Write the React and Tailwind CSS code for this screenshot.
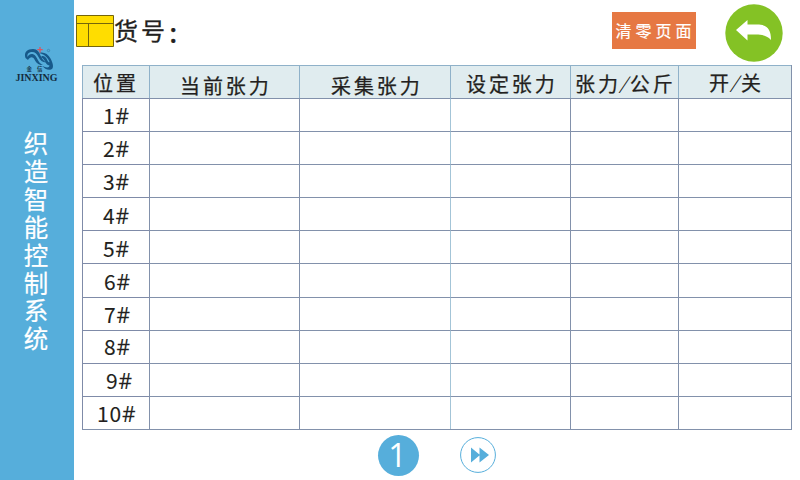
const CJK = "[font-family:'Noto_Sans_CJK_SC','Noto_Sans',sans-serif]";

const HEADERS = [
  { text: "位置", cls: "pl-[10px] pt-[2px]" },
  { text: "当前张力", cls: "pl-[30px] pt-[7px]" },
  { text: "采集张力", cls: "pl-[31px] pt-[7px]" },
  { text: "设定张力", cls: "pl-[15px] pt-[4px]" },
  { text: "张力/公斤", cls: "pl-[4px] pt-[4px]" },
  { text: "开/关", cls: "pl-[30px] pt-[2px]" },
];

const ROWS = [
  { n: 1, cls: "pl-[20px] pt-0" },
  { n: 2, cls: "pl-[20px] pt-0" },
  { n: 3, cls: "pl-[20px] pb-[1px]" },
  { n: 4, cls: "pl-[20px] pt-[1px]" },
  { n: 5, cls: "pl-[20px] pt-[2px]" },
  { n: 6, cls: "pl-[21px] pt-[1px]" },
  { n: 7, cls: "pl-[21px] pb-0" },
  { n: 8, cls: "pl-[21px] pb-[1px]" },
  { n: 9, cls: "pl-[23px] pt-0" },
  { n: 10, cls: "pl-[14px] pt-0" },
];

const COLS = "grid grid-cols-[67px_150px_151px_120px_108px_113px]";

function Logo() {
  return (
    <svg className="h-11 w-[74px]" viewBox="0 0 74 44">
      <g fill="#17598a">
        <path d="M25.500 17C23.500 11 27.500 8 33 8C37.500 8 39 11 40.500 14.500C42 18 43.500 19.500 46 21.500C42.500 21.500 40 19 38.500 16C36.500 12 34.500 10.500 31 11C28 11.500 27 13.500 27.500 16C29 12.500 33 12 35.500 15C38 18.500 38.500 22 43 24C38.500 24.500 36 21.500 34.500 18.500C33 15.500 30 15.500 28 19Z" />
        <path d="M39 12C43 10.500 48 12.500 50.500 17.500C53.500 23 54 27.500 51 28.500C47.500 29.500 44.500 27.500 42.500 25C46 27 49.500 27 49.500 24.500C47 24 46 22.500 44.500 19.500C43.500 17.500 42 16 40.500 16.500C42 13.500 45.500 15 47 18.500C48 21 48.700 21.500 49.500 21C48 16.500 44 13 39 12Z" />
      </g>
      <path d="M40 6V11.500M37.300 8.700H42.700" stroke="#d95560" strokeWidth="1.300" />
      <circle cx="48.500" cy="9.500" r="1.200" fill="none" stroke="#397fa9" strokeWidth=".7" />
      <text x="26.500" y="29.500" fontSize="5.500" fontWeight="bold" fill="#18394d" fontFamily="Noto Sans CJK SC, sans-serif">金</text>
      <text x="37" y="29.500" fontSize="5.500" fontWeight="bold" fill="#18394d" fontFamily="Noto Sans CJK SC, sans-serif">信</text>
      <text x="15.500" y="40" fontSize="10" fontWeight="bold" fill="#142c3d" textLength="42" lengthAdjust="spacingAndGlyphs" fontFamily="Liberation Serif, serif">JINXING</text>
    </svg>
  );
}

function Label({ text }) {
  return [...text].map((c, i) =>
    c === "/" ? (
      <span key={i} className="mb-[3px] inline-block w-[9px] -skew-x-[20deg] pl-[1px] text-[17px] tracking-normal [-webkit-text-stroke:0]">/</span>
    ) : (
      <span key={i}>{c}</span>
    )
  );
}

export default function App() {
  return (
    <div className={`flex h-[480px] w-[800px] overflow-hidden bg-white text-[#231f20] ${CJK}`}>
      <aside className="flex w-[74px] shrink-0 flex-col items-center bg-[#56aedb] pt-[41px]">
        <Logo />
        <div className="mt-[44px] flex flex-col pr-[2px] text-[24.500px] leading-[27.9px] text-white [-webkit-text-stroke:0.2px_white]">
          {[..."织造智能控制系统"].map((c) => (
            <span key={c}>{c}</span>
          ))}
        </div>
      </aside>

      <main className="flex w-[726px] flex-col">
        <header className="flex h-[65px] items-start">
          <svg className="ml-[2px] mt-[15px] h-8 w-[38px]" viewBox="0 0 38 32">
            <path d="M.5 .5H37.500V31.500H.5ZM.5 8.500H37.500M12.500 8.500V31.500" fill="#ffdd00" stroke="#75660b" />
          </svg>
          <h1 className="flex w-[80px] whitespace-nowrap pt-[15px] text-[24px] leading-[30px] tracking-[3px] [-webkit-text-stroke:0.3px_#231f20]">
            货号<span className="pt-[3px] text-[21px] font-bold">：</span>
          </h1>
          <button className="ml-[418px] mt-3 flex h-[37px] w-[84px] items-center justify-center whitespace-nowrap bg-[#e67843] pb-[1px] pl-[3px] text-[16px] leading-[36px] tracking-[4px] text-white [-webkit-text-stroke:0.2px_white]">
            清零页面
          </button>
          <svg className="ml-[29px] mt-1 h-[58px] w-[58px]" viewBox="0 0 58 58">
            <circle cx="29" cy="29" r="28.700" fill="#84c225" />
            <path d="M11 26L22.500 16V20.500H32C42 20.500 46 25 46 36C42 31.500 37 30.500 31 30.500H22.500V36.500Z" fill="white" />
          </svg>
        </header>

        <section className="ml-2 w-[710px] border-b border-r border-[#8291ab]">
          <div className={`${COLS} h-[33px] bg-[#e0ecef]`}>
            {HEADERS.map((h) => (
              <div key={h.text} className={`flex items-center whitespace-nowrap border-l border-t border-[#8fb1c9] text-[20px] leading-[24px] tracking-[2.900px] [-webkit-text-stroke:0.25px_#231f20] ${h.cls}`}>
                <Label text={h.text} />
              </div>
            ))}
          </div>
          {ROWS.map((r) => (
            <div key={r.n} className={`${COLS} h-[33.1px]`}>
              <div className={`flex items-center border-l border-t border-[#7f8ba8] text-[21px] leading-[24px] tracking-[0.8px] [-webkit-text-stroke:0.1px_#231f20] ${r.cls}`}>
                {r.n}
                <span className="pt-[2px] [font-family:'Open_Sans',sans-serif]">#</span>
              </div>
              <div className="border-l border-t border-[#8291ab]" />
              <div className="border-l border-t border-[#8291ab]" />
              <div className="border-l border-t border-l-[#a3c4d7] border-t-[#8291ab]" />
              <div className="border-l border-t border-[#8291ab]" />
              <div className="border-l border-t border-[#8291ab]" />
            </div>
          ))}
        </section>

        <nav className="flex items-start pl-[304px] pt-[5px]">
          <div className="flex h-[41px] w-[41px] items-center justify-center rounded-full bg-[#56aedb] pr-[2px] text-[32px] leading-none text-white [font-family:'Open_Sans',sans-serif]">
            1
          </div>
          <svg className="ml-[41px] mt-[2px] h-9 w-9" viewBox="0 0 36 36">
            <circle cx="18" cy="18" r="17.400" fill="white" stroke="#56aedb" />
            <path d="M11 10.500L20 18L11 25.500ZM19.500 10.500L29 18L19.500 25.500Z" fill="#56aedb" />
          </svg>
        </nav>
      </main>
    </div>
  );
}
